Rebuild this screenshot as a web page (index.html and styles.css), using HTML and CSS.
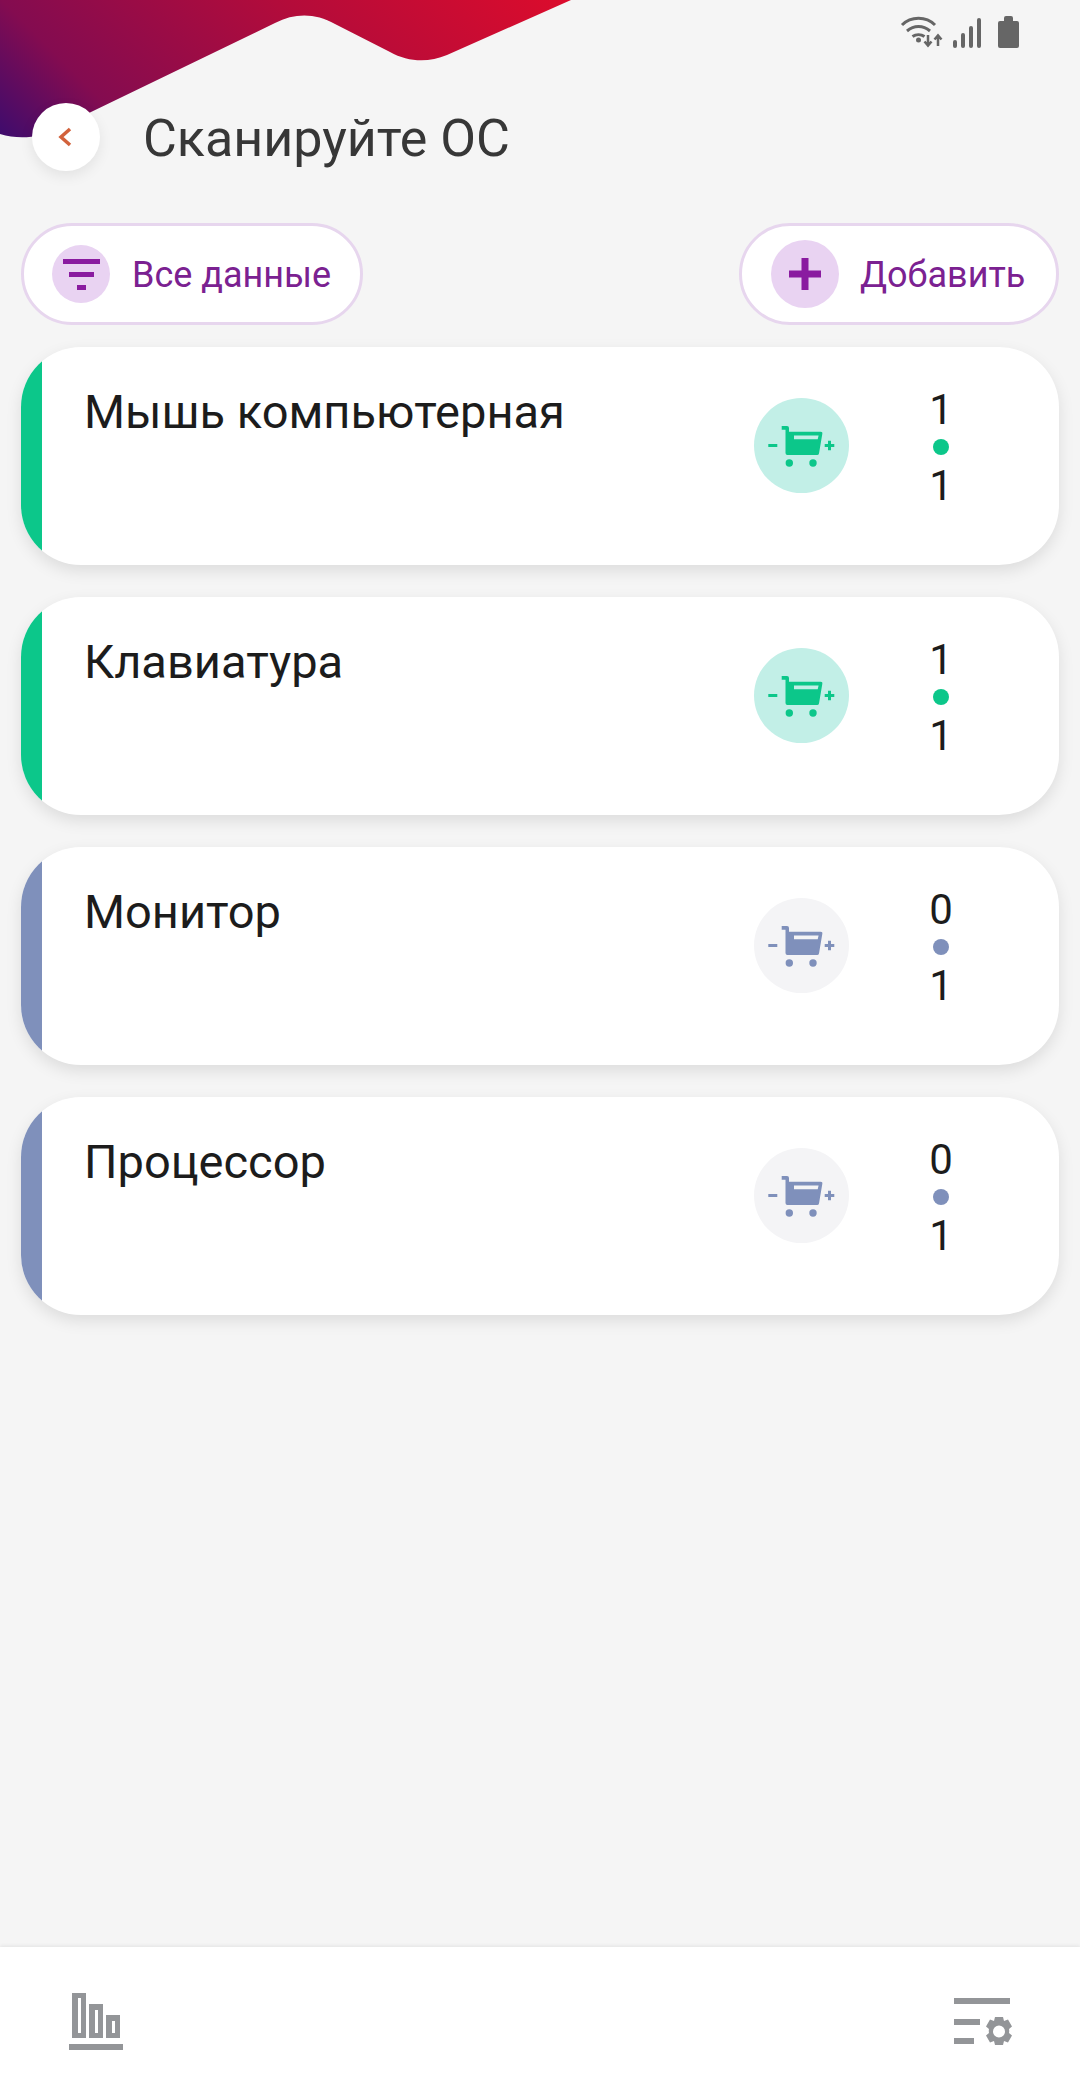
FILE: index.html
```html
<!DOCTYPE html>
<html lang="ru">

<head>
    <meta charset="UTF-8">
    <meta name="viewport" content="width=device-width, initial-scale=1.0">
    <title>Сканируйте ОС</title>
    <link rel="stylesheet" href="styles.css">
</head>

<body>

    <svg class="defs" width="0" height="0">
        <symbol id="cart" viewBox="0 0 95 95">
            <path d="M14.3 46h9v3h-9z"/>
            <path d="M74 42.700h3v3.300h3.300v3h-3.300v3.300h-3v-3.300h-3.300v-3h3.300z"/>
            <path fill-rule="evenodd" d="M27.700 28h5.300a2 2 0 0 1 2 2v3.700h31.500a1.800 1.800 0 0 1 1.800 2.200l-3.300 19.600a2 2 0 0 1-2 1.500h-29.500a2 2 0 0 1-2-2v-23.300h-3.800zM40 37.500v3.700h23.700l.9-3.700z"/>
            <circle cx="35.300" cy="65" r="3.700"/>
            <circle cx="59" cy="65" r="3.700"/>
        </symbol>
    </svg>

    <div id="page">
        <svg class="wave" width="572" height="142" viewBox="0 0 572 142">
            <defs>
                <linearGradient id="waveFill" gradientUnits="userSpaceOnUse" x1="0" y1="140" x2="355" y2="-215">
                    <stop offset="0" stop-color="#3c0c6e"/>
                    <stop offset=".2" stop-color="#840c50"/>
                    <stop offset=".6" stop-color="#b40c3a"/>
                    <stop offset="1" stop-color="#dc0c2c"/>
                </linearGradient>
            </defs>
            <path fill="url(#waveFill)" d="M0 0H571L447 55C428 63 408 62 390 52L335 24C315 13 295 13 275 23L60 127C40 138 20 140 0 134Z"/>
        </svg>

        <div class="status">
            <svg class="st-wifi" width="44" height="32" viewBox="0 0 44 32" fill="none" stroke="#666">
                <path d="M2 9C11 0 26 0 35 9" stroke-width="3"/>
                <path d="M7 15C14 9 23 9 30 15" stroke-width="3"/>
                <path d="M12.500 20.500C16 18 21 18 24.500 20.500" stroke-width="3"/>
                <circle cx="18.500" cy="24" r="2.500" fill="#666" stroke="none"/>
                <path d="M28 19v10M24.500 25.500l3.500 4 3.500-4" stroke-width="2.500"/>
                <path d="M38 30v-10M34.500 23.500l3.500-4 3.500 4" stroke-width="2.500"/>
            </svg>
            <svg class="st-signal" width="28" height="30" viewBox="0 0 28 30" fill="#666">
                <rect x="0" y="22" width="4" height="8" rx="2"/>
                <rect x="8" y="15" width="4" height="15" rx="2"/>
                <rect x="16" y="8" width="4" height="22" rx="2"/>
                <rect x="24" y="0" width="4" height="30" rx="2"/>
            </svg>
            <svg width="21" height="32" viewBox="0 0 21 32" fill="#666">
                <path d="M6 2a2 2 0 0 1 2-2h5a2 2 0 0 1 2 2v3h4a2 2 0 0 1 2 2v23a2 2 0 0 1-2 2H2a2 2 0 0 1-2-2V7a2 2 0 0 1 2-2h4z"/>
            </svg>
        </div>

        <div class="title-row">
            <div class="back">
                <svg width="14" height="20" viewBox="0 0 14 20" fill="none" stroke="#d2623c" stroke-width="3.500">
                    <path d="M12 2L3 10l9 8"/>
                </svg>
            </div>
            <h1>Сканируйте ОС</h1>
        </div>

        <div class="actions">
            <div class="pill pill-filter">
                <span class="pill-ico ico-filter">
                    <svg width="58" height="58" viewBox="0 0 58 58" fill="#8a1ba0">
                        <rect x="11" y="14" width="37" height="5"/>
                        <rect x="17" y="27" width="25" height="5"/>
                        <rect x="25" y="40" width="9" height="5"/>
                    </svg>
                </span>
                <span class="pill-text">Все данные</span>
            </div>
            <div class="pill pill-add">
                <span class="pill-ico ico-add">
                    <svg width="68" height="68" viewBox="0 0 68 68" fill="#8a1ba0">
                        <rect x="18" y="30.500" width="32" height="7"/>
                        <rect x="30.500" y="18" width="7" height="32"/>
                    </svg>
                </span>
                <span class="pill-text">Добавить</span>
            </div>
        </div>

        <div class="list">
            <div class="card on">
                <div class="stripe"></div>
                <div class="name">Мышь компьютерная</div>
                <div class="cart-btn"><svg width="95" height="95"><use href="#cart"/></svg></div>
                <div class="count"><span>1</span><i></i><span>1</span></div>
            </div>
            <div class="card on">
                <div class="stripe"></div>
                <div class="name">Клавиатура</div>
                <div class="cart-btn"><svg width="95" height="95"><use href="#cart"/></svg></div>
                <div class="count"><span>1</span><i></i><span>1</span></div>
            </div>
            <div class="card off">
                <div class="stripe"></div>
                <div class="name">Монитор</div>
                <div class="cart-btn"><svg width="95" height="95"><use href="#cart"/></svg></div>
                <div class="count"><span>0</span><i></i><span>1</span></div>
            </div>
            <div class="card off">
                <div class="stripe"></div>
                <div class="name">Процессор</div>
                <div class="cart-btn"><svg width="95" height="95"><use href="#cart"/></svg></div>
                <div class="count"><span>0</span><i></i><span>1</span></div>
            </div>
        </div>

        <div class="nav">
            <svg width="54" height="57" viewBox="0 0 54 57" fill="#939598">
                <path fill-rule="evenodd" d="M3 0h14v45H3zM9 5v35h3V5z"/>
                <path fill-rule="evenodd" d="M20 11h14v34H20zM26 17v23h3V17z"/>
                <path fill-rule="evenodd" d="M37 22h14v23H37zM43 28v12h3V28z"/>
                <rect x="0" y="51" width="54" height="6"/>
            </svg>
            <svg class="nav-settings" width="60" height="52" viewBox="0 0 60 52" fill="#939598">
                <rect x="0" y="0" width="56" height="6"/>
                <rect x="0" y="21" width="26" height="6"/>
                <rect x="0" y="40" width="20" height="6"/>
                <path fill-rule="evenodd" d="M41 19h8l1 4 4-1.500 4 7-3 2.500a9 9 0 0 1 0 4l3 2.500-4 7-4-1.500-1 4h-8l-1-4-4 1.500-4-7 3-2.500a9 9 0 0 1 0-4l-3-2.500 4-7 4 1.500zM45 27.500a6 6 0 1 0 0 12 6 6 0 0 0 0-12z"/>
            </svg>
        </div>
    </div>

</body>

</html>
```
FILE: styles.css
```css
* {
    margin: 0;
    padding: 0;
    box-sizing: border-box;
}

body {
    background: #f5f5f5;
    font-family: Roboto, "Noto Sans", sans-serif;
    color: #1c1c1c;
}

.defs {
    position: absolute;
}

#page {
    position: relative;
    display: flex;
    flex-direction: column;
    height: 2092px;
    overflow: hidden;
}

.wave {
    position: absolute;
    left: 0;
    top: 0;
}

.status {
    position: relative;
    display: flex;
    justify-content: flex-end;
    align-items: flex-end;
    height: 48px;
    padding-right: 61px;
}

.st-wifi {
    margin-right: 9px;
}

.st-signal {
    margin-right: 17px;
}

.title-row {
    position: relative;
    display: flex;
    align-items: center;
    gap: 43px;
    margin-top: 55px;
    padding-left: 32px;
}

.back {
    display: flex;
    align-items: center;
    justify-content: center;
    width: 68px;
    height: 68px;
    padding-right: 2px;
    background: #fff;
    border-radius: 50%;
    box-shadow: 0 5px 14px rgba(0, 0, 0, .08);
}

h1 {
    padding-top: 3px;
    font-size: 52px;
    font-weight: 400;
    line-height: 65px;
    color: #373737;
}

.actions {
    display: flex;
    justify-content: space-between;
    margin-top: 52px;
    padding: 0 21px;
}

.pill {
    display: flex;
    align-items: center;
    height: 102px;
    background: #fff;
    border: 3px solid #e7d6ee;
    border-radius: 51px;
    font-size: 36px;
    color: #7b2191;
}

.pill-filter {
    width: 342px;
    padding-left: 28px;
    gap: 22px;
}

.pill-add {
    width: 320px;
    padding-left: 29px;
    gap: 21px;
}

.pill-ico {
    display: flex;
    background: #e9d3f2;
    border-radius: 50%;
}

.pill-text {
    padding-top: 2px;
}

.list {
    display: flex;
    flex-direction: column;
    gap: 32px;
    flex: 1;
    margin-top: 22px;
    padding: 0 21px;
}

.card {
    display: flex;
    align-items: flex-start;
    height: 218px;
    overflow: hidden;
    background: #fff;
    border-radius: 60px;
    box-shadow: 0 6px 16px rgba(0, 0, 0, .1);
}

.stripe {
    width: 21px;
    height: 100%;
}

.name {
    flex: 1;
    padding: 38px 0 0 42px;
    font-size: 47px;
    line-height: 54px;
}

.cart-btn {
    width: 95px;
    height: 95px;
    margin-top: 51px;
    border-radius: 50%;
}

.count {
    display: flex;
    flex-direction: column;
    align-items: center;
    width: 60px;
    margin: 39px 88px 0 62px;
    font-size: 42px;
    line-height: 48px;
}

.count i {
    width: 16px;
    height: 16px;
    margin: 5px 0 7px;
    border-radius: 50%;
}

.on .stripe,
.on .count i {
    background: #0cc78a;
}

.on .cart-btn {
    background: #c2efe7;
    fill: #0cc78a;
}

.off .stripe,
.off .count i {
    background: #7f90bb;
}

.off .cart-btn {
    background: #f4f4f6;
    fill: #7f90bb;
}

.nav {
    display: flex;
    justify-content: space-between;
    align-items: flex-start;
    height: 145px;
    padding: 46px 66px 0 69px;
    background: #fff;
    box-shadow: 0 -1px 4px rgba(0, 0, 0, .08);
}

.nav-settings {
    margin-top: 5px;
}
```
